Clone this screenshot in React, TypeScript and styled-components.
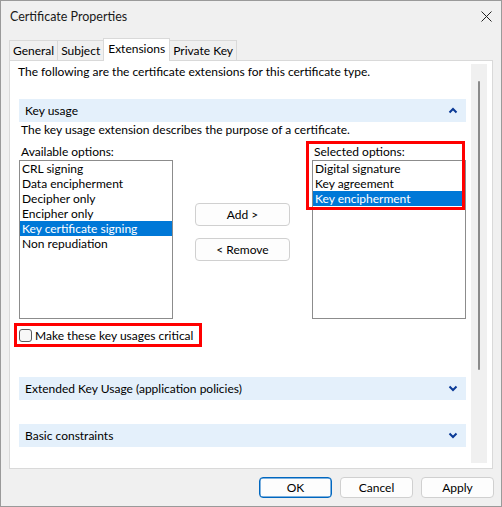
import React from "react";
import styled, { createGlobalStyle } from "styled-components";

const FONT = `Lato, "Noto Sans", "Segoe UI", sans-serif`;

const GlobalStyle = createGlobalStyle`
  html, body {
    margin: 0;
    padding: 0;
    background: #f0f0f0;
  }
  body {
    font-family: ${FONT};
    font-size: 12px;
    color: #000;
  }
  * { box-sizing: border-box; }
`;

const Window = styled.div`
  width: 502px;
  height: 507px;
  border: 1px solid #9a9a9a;
  background: #f0f0f0;
  display: flex;
  flex-direction: column;
`;

const TitleBar = styled.div`
  height: 30px;
  display: flex;
  align-items: center;
  justify-content: space-between;
  padding: 0 8px 0 9px;
`;

const Title = styled.span`
  font-size: 12.5px;
  color: #1a1a1a;
`;

const CloseButton = styled.button`
  width: 14px;
  height: 14px;
  padding: 0;
  border: none;
  background: transparent;
  display: flex;
  align-items: center;
  justify-content: center;
`;

const TabStrip = styled.div`
  height: 29px;
  margin-left: 8px;
  display: flex;
  align-items: flex-end;
`;

const Tab = styled.div<{ $active?: boolean }>`
  position: relative;
  height: ${(p) => (p.$active ? "23px" : "20px")};
  margin-bottom: ${(p) => (p.$active ? "-1px" : "0")};
  margin-left: -1px;
  padding: ${(p) => (p.$active ? "0 4px 3px" : "0 3px")};
  display: flex;
  align-items: center;
  border: 1px solid #d9d9d9;
  border-bottom: none;
  background: ${(p) => (p.$active ? "#ffffff" : "#f0f0f0")};
  z-index: ${(p) => (p.$active ? 1 : 0)};
  white-space: nowrap;
  &:first-child { margin-left: 0; }
`;

const Panel = styled.div`
  margin: 0 8px;
  height: 409px;
  border: 1px solid #d9d9d9;
  background: #fff;
  display: flex;
  padding: 3px 5px 5px 0;
`;

const ScrollContent = styled.div`
  flex: 1;
  overflow: hidden;
  padding: 0 5px 0 8px;
`;

const Intro = styled.div`
  line-height: 16px;
  white-space: nowrap;
`;

const Section = styled.div<{ $gap: number }>`
  margin: ${(p) => p.$gap}px 0 0 1px;
`;

const SectionHeader = styled.div`
  height: 23px;
  background: #e4f0fb;
  display: flex;
  align-items: center;
  justify-content: space-between;
  padding: 0 8px 0 6px;
`;

const Description = styled.div`
  line-height: 16px;
  padding-left: 2px;
  white-space: nowrap;
`;

const Columns = styled.div`
  margin-top: 6px;
  display: grid;
  grid-template-columns: 154px 1fr 154px;
`;

const Column = styled.div`
  position: relative;
  display: flex;
  flex-direction: column;
`;

const FieldLabel = styled.div`
  line-height: 16px;
  padding-left: 2px;
  white-space: nowrap;
`;

const ListBox = styled.div`
  height: 159px;
  border: 1px solid #8c8c8c;
  background: #fff;
`;

const ListItem = styled.div<{ $selected?: boolean }>`
  height: 15px;
  line-height: 15px;
  padding-left: 2px;
  white-space: nowrap;
  background: ${(p) => (p.$selected ? "#0078d7" : "transparent")};
  color: ${(p) => (p.$selected ? "#fff" : "#000")};
`;

const MoveButtons = styled.div`
  display: flex;
  flex-direction: column;
  align-items: center;
  gap: 12px;
  padding-top: 59px;
`;

const PushButton = styled.button<{ $width: number; $height: number; $default?: boolean }>`
  width: ${(p) => p.$width}px;
  height: ${(p) => p.$height}px;
  border: 1px solid ${(p) => (p.$default ? "#0067c0" : "#d0d0d0")};
  box-shadow: ${(p) => (p.$default ? "inset 0 0 0 0.5px #0067c0" : "none")};
  border-radius: 4px;
  background: #fdfdfd;
  font-family: ${FONT};
  font-size: 12px;
  color: #000;
  padding: 0;
`;

/* red call-out frame drawn over the first rows of the selected list */
const Callout = styled.div`
  position: absolute;
  left: -6px;
  top: -3px;
  width: 159px;
  height: 69px;
  border: 3px solid #ff0000;
  pointer-events: none;
`;

const CriticalRow = styled.label`
  margin: 4px 0 0 -5px;
  width: 188px;
  height: 24px;
  border: 3px solid #ff0000;
  display: flex;
  align-items: center;
  gap: 3px;
  padding-left: 2px;
  white-space: nowrap;
`;

const CheckBox = styled.span`
  flex-shrink: 0;
  width: 13px;
  height: 13px;
  border: 1px solid #5c5c5c;
  border-radius: 3px;
  background: #f7f7f7;
`;

const ScrollTrack = styled.div`
  width: 16px;
  background: #f0f0f0;
  display: flex;
  flex-direction: column;
  align-items: center;
  padding-top: 17px;
`;

const ScrollThumb = styled.div`
  width: 2px;
  height: 289px;
  border-radius: 1px;
  background: #8a8a8a;
`;

const Footer = styled.div`
  display: flex;
  justify-content: flex-end;
  gap: 8px;
  padding: 8px 7px 0 0;
`;

const Chevron = ({ up }: { up?: boolean }) => (
  <svg width="10" height="7" viewBox="0 0 10 7">
    <polyline
      points={up ? "1.5,5.5 5,2 8.5,5.5" : "1.5,1.5 5,5 8.5,1.5"}
      fill="none"
      stroke="#0a3a96"
      strokeWidth="2"
    />
  </svg>
);

const available = [
  "CRL signing",
  "Data encipherment",
  "Decipher only",
  "Encipher only",
  "Key certificate signing",
  "Non repudiation",
];
const selected = ["Digital signature", "Key agreement", "Key encipherment"];

export default function App() {
  return (
    <>
      <GlobalStyle />
      <Window>
        <TitleBar>
          <Title>Certificate Properties</Title>
          <CloseButton aria-label="Close">
            <svg width="11" height="11" viewBox="0 0 11 11">
              <path d="M0.5 0.5 L10.5 10.5 M10.5 0.5 L0.5 10.5" stroke="#222" strokeWidth="1" />
            </svg>
          </CloseButton>
        </TitleBar>

        <TabStrip>
          <Tab>General</Tab>
          <Tab>Subject</Tab>
          <Tab $active>Extensions</Tab>
          <Tab>Private Key</Tab>
        </TabStrip>

        <Panel>
          <ScrollContent>
            <Intro>The following are the certificate extensions for this certificate type.</Intro>

            <Section $gap={19}>
              <SectionHeader>
                <span>Key usage</span>
                <Chevron up />
              </SectionHeader>
              <Description>The key usage extension describes the purpose of a certificate.</Description>

              <Columns>
                <Column>
                  <FieldLabel>Available options:</FieldLabel>
                  <ListBox>
                    {available.map((item) => (
                      <ListItem key={item} $selected={item === "Key certificate signing"}>
                        {item}
                      </ListItem>
                    ))}
                  </ListBox>
                </Column>

                <MoveButtons>
                  <PushButton $width={95} $height={23}>Add &gt;</PushButton>
                  <PushButton $width={95} $height={23}>&lt; Remove</PushButton>
                </MoveButtons>

                <Column>
                  <FieldLabel>Selected options:</FieldLabel>
                  <ListBox>
                    {selected.map((item) => (
                      <ListItem key={item} $selected={item === "Key encipherment"}>
                        {item}
                      </ListItem>
                    ))}
                  </ListBox>
                  <Callout />
                </Column>
              </Columns>

              <CriticalRow>
                <CheckBox />
                <span>Make these key usages critical</span>
              </CriticalRow>
            </Section>

            <Section $gap={30}>
              <SectionHeader>
                <span>Extended Key Usage (application policies)</span>
                <Chevron />
              </SectionHeader>
            </Section>

            <Section $gap={24}>
              <SectionHeader>
                <span>Basic constraints</span>
                <Chevron />
              </SectionHeader>
            </Section>
          </ScrollContent>

          <ScrollTrack>
            <ScrollThumb />
          </ScrollTrack>
        </Panel>

        <Footer>
          <PushButton $width={73} $height={21} $default>OK</PushButton>
          <PushButton $width={73} $height={21}>Cancel</PushButton>
          <PushButton $width={73} $height={21}>Apply</PushButton>
        </Footer>
      </Window>
    </>
  );
}
